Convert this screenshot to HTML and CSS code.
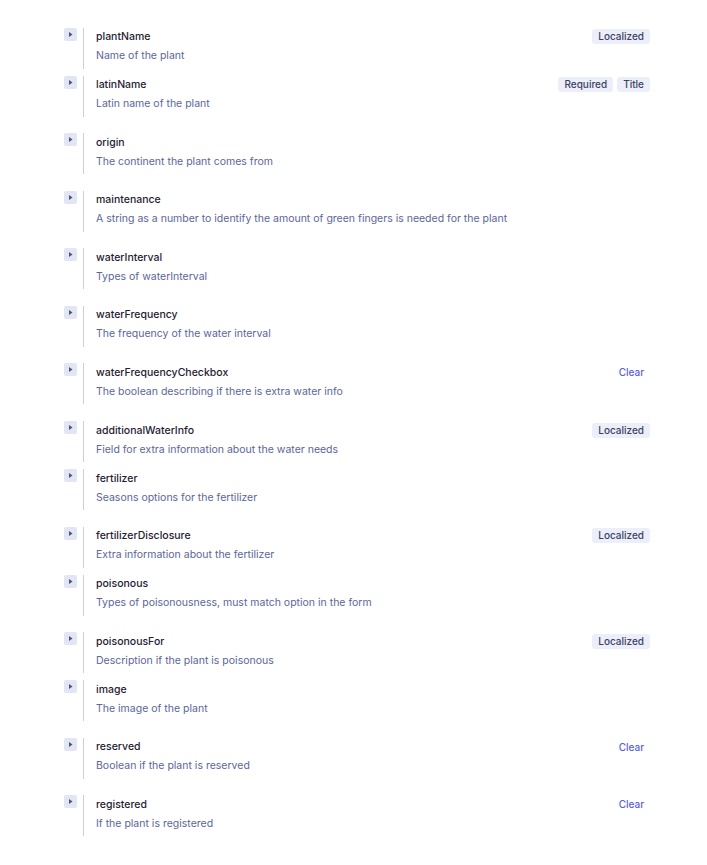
FILE: index.html
```html
<!DOCTYPE html>
<html>
<head>
<meta charset="utf-8">
<link rel="stylesheet" href="styles.css">
</head>
<body>
<div class="fields">
  <div class="field short">
    <button class="toggle"><svg viewBox="0 0 13 13"><path d="M5 4l3.5 2.5-3.5 2.5z"/></svg></button>
    <div class="body">
      <div class="head"><span class="name">plantName</span><span class="tags"><span class="badge">Localized</span></span></div>
      <div class="desc">Name of the plant</div>
    </div>
  </div>
  <div class="field">
    <button class="toggle"><svg viewBox="0 0 13 13"><path d="M5 4l3.5 2.5-3.5 2.5z"/></svg></button>
    <div class="body">
      <div class="head"><span class="name">latinName</span><span class="tags"><span class="badge">Required</span><span class="badge">Title</span></span></div>
      <div class="desc">Latin name of the plant</div>
    </div>
  </div>
  <div class="field">
    <button class="toggle"><svg viewBox="0 0 13 13"><path d="M5 4l3.5 2.5-3.5 2.5z"/></svg></button>
    <div class="body">
      <div class="head"><span class="name">origin</span></div>
      <div class="desc">The continent the plant comes from</div>
    </div>
  </div>
  <div class="field">
    <button class="toggle"><svg viewBox="0 0 13 13"><path d="M5 4l3.5 2.5-3.5 2.5z"/></svg></button>
    <div class="body">
      <div class="head"><span class="name">maintenance</span></div>
      <div class="desc">A string as a number to identify the amount of green fingers is needed for the plant</div>
    </div>
  </div>
  <div class="field">
    <button class="toggle"><svg viewBox="0 0 13 13"><path d="M5 4l3.5 2.5-3.5 2.5z"/></svg></button>
    <div class="body">
      <div class="head"><span class="name">waterInterval</span></div>
      <div class="desc">Types of waterInterval</div>
    </div>
  </div>
  <div class="field">
    <button class="toggle"><svg viewBox="0 0 13 13"><path d="M5 4l3.5 2.5-3.5 2.5z"/></svg></button>
    <div class="body">
      <div class="head"><span class="name">waterFrequency</span></div>
      <div class="desc">The frequency of the water interval</div>
    </div>
  </div>
  <div class="field">
    <button class="toggle"><svg viewBox="0 0 13 13"><path d="M5 4l3.5 2.5-3.5 2.5z"/></svg></button>
    <div class="body">
      <div class="head"><span class="name">waterFrequencyCheckbox</span><span class="tags"><span class="clear">Clear</span></span></div>
      <div class="desc">The boolean describing if there is extra water info</div>
    </div>
  </div>
  <div class="field short">
    <button class="toggle"><svg viewBox="0 0 13 13"><path d="M5 4l3.5 2.5-3.5 2.5z"/></svg></button>
    <div class="body">
      <div class="head"><span class="name">additionalWaterInfo</span><span class="tags"><span class="badge">Localized</span></span></div>
      <div class="desc">Field for extra information about the water needs</div>
    </div>
  </div>
  <div class="field">
    <button class="toggle"><svg viewBox="0 0 13 13"><path d="M5 4l3.5 2.5-3.5 2.5z"/></svg></button>
    <div class="body">
      <div class="head"><span class="name">fertilizer</span></div>
      <div class="desc">Seasons options for the fertilizer</div>
    </div>
  </div>
  <div class="field short">
    <button class="toggle"><svg viewBox="0 0 13 13"><path d="M5 4l3.5 2.5-3.5 2.5z"/></svg></button>
    <div class="body">
      <div class="head"><span class="name">fertilizerDisclosure</span><span class="tags"><span class="badge">Localized</span></span></div>
      <div class="desc">Extra information about the fertilizer</div>
    </div>
  </div>
  <div class="field">
    <button class="toggle"><svg viewBox="0 0 13 13"><path d="M5 4l3.5 2.5-3.5 2.5z"/></svg></button>
    <div class="body">
      <div class="head"><span class="name">poisonous</span></div>
      <div class="desc">Types of poisonousness, must match option in the form</div>
    </div>
  </div>
  <div class="field short">
    <button class="toggle"><svg viewBox="0 0 13 13"><path d="M5 4l3.5 2.5-3.5 2.5z"/></svg></button>
    <div class="body">
      <div class="head"><span class="name">poisonousFor</span><span class="tags"><span class="badge">Localized</span></span></div>
      <div class="desc">Description if the plant is poisonous</div>
    </div>
  </div>
  <div class="field">
    <button class="toggle"><svg viewBox="0 0 13 13"><path d="M5 4l3.5 2.5-3.5 2.5z"/></svg></button>
    <div class="body">
      <div class="head"><span class="name">image</span></div>
      <div class="desc">The image of the plant</div>
    </div>
  </div>
  <div class="field">
    <button class="toggle"><svg viewBox="0 0 13 13"><path d="M5 4l3.5 2.5-3.5 2.5z"/></svg></button>
    <div class="body">
      <div class="head"><span class="name">reserved</span><span class="tags"><span class="clear">Clear</span></span></div>
      <div class="desc">Boolean if the plant is reserved</div>
    </div>
  </div>
  <div class="field">
    <button class="toggle"><svg viewBox="0 0 13 13"><path d="M5 4l3.5 2.5-3.5 2.5z"/></svg></button>
    <div class="body">
      <div class="head"><span class="name">registered</span><span class="tags"><span class="clear">Clear</span></span></div>
      <div class="desc">If the plant is registered</div>
    </div>
  </div>
</div>
</body>
</html>
```

FILE: styles.css
```css
* { box-sizing: border-box; }
html, body { margin: 0; padding: 0; background: #fff; }
body { font-family: Inter, "Noto Sans", sans-serif; -webkit-font-smoothing: antialiased; }
.fields { padding: 27.5px 57px 0 64px; display: flex; flex-direction: column; }
.field { display: flex; align-items: flex-start; margin-bottom: 16.6px; }
.field.short { margin-bottom: 7px; }
.toggle {
  width: 13px; height: 13px; padding: 0; margin: 0; border: 0; border-radius: 2px;
  background: #e2e5f3; display: flex; align-items: center; justify-content: center; flex: none;
}
.toggle svg { width: 13px; height: 13px; fill: #4d5373; }
.body { flex: 1; margin-left: 6px; border-left: 1px solid #c9cde0; padding-left: 12px; min-height: 41px; }
.head { display: flex; align-items: center; justify-content: space-between; height: 18px; }
.name { font-size: 10.5px; font-weight: 500; color: #1f2133; }
.tags { display: flex; gap: 4px; }
.badge { font-size: 10px; color: #3d4262; background: #eceef9; border-radius: 3px; padding: 0 6px; height: 15px; line-height: 15px; font-weight: 500; }
.clear { font-size: 10px; color: #5a5ee0; padding-right: 6px; font-weight: 500; }
.desc { font-size: 10.5px; color: #5c6698; margin-top: 1.5px; line-height: 18px; }
```
